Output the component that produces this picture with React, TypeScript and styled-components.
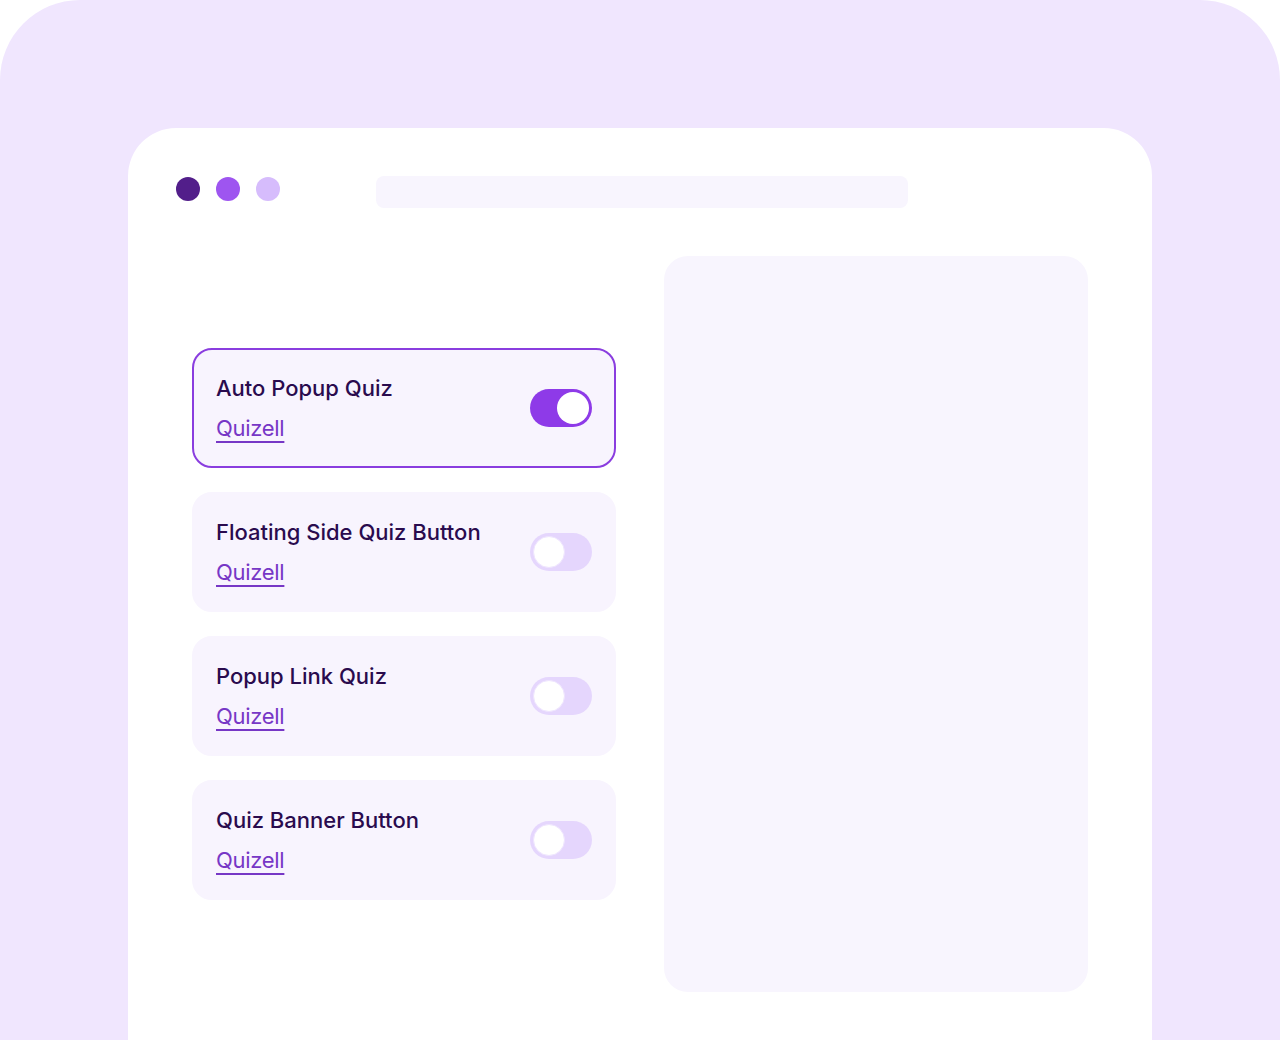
import React from "react";
import styled, { createGlobalStyle } from "styled-components";

const Global = createGlobalStyle`
  html, body { margin: 0; padding: 0; background: #ffffff; }
  body { font-family: Inter, "Noto Sans", sans-serif; }
`;

const Frame = styled.div`
  width: 1280px;
  height: 1040px;
  box-sizing: border-box;
  background: #f0e6fe;
  border-radius: 80px 80px 0 0;
  padding: 128px 128px 0;
  overflow: hidden;
`;

const Window = styled.div`
  height: 912px;
  background: #ffffff;
  border-radius: 48px 48px 0 0;
  padding: 48px 64px 0 48px;
  box-sizing: border-box;
`;

const TopBar = styled.div`
  display: flex;
  align-items: center;
  height: 32px;
`;

const Dots = styled.div`
  display: flex;
  align-self: flex-start;
  padding-top: 1px;
  gap: 16px;
  margin-right: 96px;
`;

const Dot = styled.span<{ $c: string }>`
  width: 24px;
  height: 24px;
  border-radius: 50%;
  background: ${(p) => p.$c};
`;

const Address = styled.div`
  width: 532px;
  height: 32px;
  border-radius: 8px;
  background: #f8f5fe;
`;

const Body = styled.div`
  display: grid;
  grid-template-columns: 424px 424px;
  gap: 48px;
  margin-top: 48px;
  padding-left: 16px;
`;

const Cards = styled.div`
  display: flex;
  flex-direction: column;
  justify-content: center;
  gap: 24px;
`;

const Card = styled.div<{ $active?: boolean }>`
  height: 120px;
  box-sizing: border-box;
  border-radius: 20px;
  background: #f8f4fe;
  border: 2px solid ${(p) => (p.$active ? "#8a3ddf" : "#f8f4fe")};
  padding: 0 22px;
  display: flex;
  align-items: center;
  justify-content: space-between;
`;

const Texts = styled.div`
  display: flex;
  flex-direction: column;
  gap: 12px;
`;

const Title = styled.div`
  font-size: 22px;
  line-height: 28px;
  font-weight: 500;
  color: #2a0b4e;
  letter-spacing: 0;
`;

const Link = styled.a`
  font-size: 22px;
  line-height: 28px;
  font-weight: 400;
  color: #7737c6;
  text-decoration: underline;
  text-underline-offset: 5px;
  text-decoration-thickness: 2px;
  letter-spacing: -0.3px;
  width: fit-content;
`;

const Toggle = styled.div<{ $on?: boolean }>`
  width: 62px;
  height: 38px;
  border-radius: 19px;
  box-sizing: border-box;
  padding: 3px;
  background: ${(p) => (p.$on ? "#8e3ae8" : "#e5d6fd")};
  display: flex;
  justify-content: ${(p) => (p.$on ? "flex-end" : "flex-start")};
`;

const Knob = styled.span<{ $on?: boolean }>`
  width: 32px;
  height: 32px;
  border-radius: 50%;
  background: #ffffff;
  box-sizing: border-box;
  border: ${(p) => (p.$on ? "none" : "1px solid #eee4fe")};
`;

const Panel = styled.div`
  height: 736px;
  border-radius: 24px;
  background: #f8f5fe;
`;

const items = [
  { title: "Auto Popup Quiz", on: true },
  { title: "Floating Side Quiz Button", on: false },
  { title: "Popup Link Quiz", on: false },
  { title: "Quiz Banner Button", on: false },
];

export default function App() {
  return (
    <>
      <Global />
      <Frame>
        <Window>
          <TopBar>
            <Dots>
              <Dot $c="#521e8a" />
              <Dot $c="#9e55f0" />
              <Dot $c="#d6bcfc" />
            </Dots>
            <Address />
          </TopBar>
          <Body>
            <Cards>
              {items.map((it) => (
                <Card key={it.title} $active={it.on}>
                  <Texts>
                    <Title>{it.title}</Title>
                    <Link>Quizell</Link>
                  </Texts>
                  <Toggle $on={it.on}>
                    <Knob $on={it.on} />
                  </Toggle>
                </Card>
              ))}
            </Cards>
            <Panel />
          </Body>
        </Window>
      </Frame>
    </>
  );
}
